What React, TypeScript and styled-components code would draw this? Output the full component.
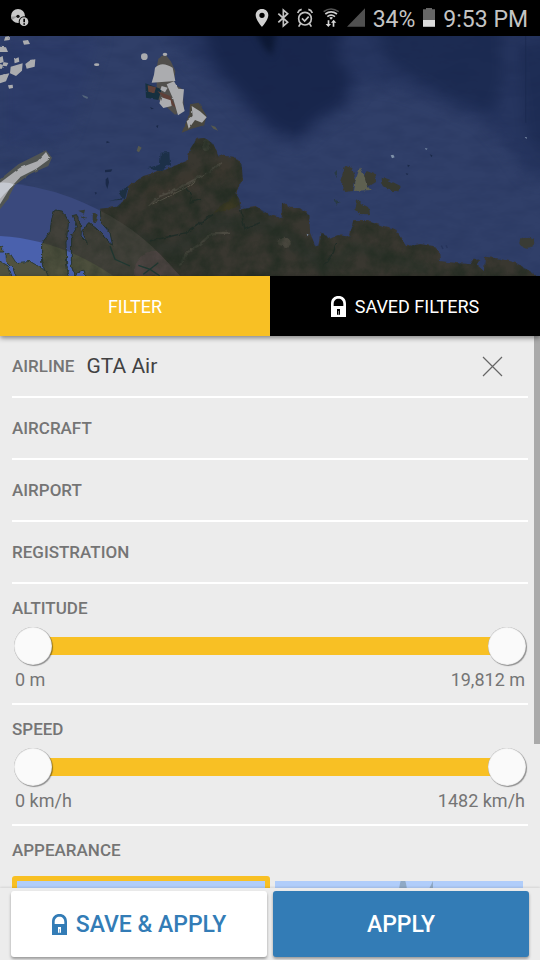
import React, { useState } from "react";
import styled, { createGlobalStyle } from "styled-components";

const YELLOW = "#f8c024";
const BLUE = "#337cb6";
const PANEL = "#ececec";

const GlobalStyle = createGlobalStyle`
  * { box-sizing: border-box; }
  body { margin: 0; background: ${PANEL}; font-family: Roboto, "Liberation Sans", sans-serif; }
  button, input { font: inherit; color: inherit; }
`;

const Screen = styled.main`
  display: flex;
  flex-direction: column;
  height: 100vh;
  overflow: hidden;
  background: ${PANEL};
`;

const StatusBar = styled.header`
  display: flex;
  align-items: center;
  flex: none;
  gap: 8px;
  height: 36px;
  padding: 0 12px 0 10px;
  background: #000;
  color: #c4c4c4;
  font-size: 23px;
  line-height: 32px;
  white-space: nowrap;
  svg { flex: none; display: block; }
`;

const StatusText = styled.span`
  padding-top: 3px;
`;

const Spacer = styled.div`
  flex: 1;
`;

const MapView = styled.div`
  flex: none;
  height: 240px;
  overflow: hidden;
  background: #303f69;
  svg { display: block; width: 100%; height: 100%; }
`;

const Tabs = styled.div`
  display: grid;
  grid-template-columns: 1fr 1fr;
  flex: none;
  position: relative;
  z-index: 1;
  box-shadow: 0 2px 5px rgba(0, 0, 0, 0.45);
`;

const Tab = styled.button<{ $active: boolean }>`
  display: flex;
  align-items: center;
  justify-content: center;
  gap: 9px;
  height: 60px;
  padding: 0;
  border: 0;
  background: ${(p) => (p.$active ? YELLOW : "#000")};
  color: #fff;
  font-size: 18px;
  line-height: 24px;
  cursor: pointer;
`;

const ButtonText = styled.span`
  padding-top: 2px;
`;

const Body = styled.div`
  flex: 1;
  min-height: 0;
  position: relative;
`;

const Scroller = styled.div`
  height: 100%;
  overflow-y: auto;
  scrollbar-width: none;
  padding: 0 12px;
  &::-webkit-scrollbar { display: none; }
`;

const ScrollThumb = styled.div`
  position: absolute;
  top: 0;
  right: 0;
  width: 6px;
  height: 74%;
  background: #aaa;
`;

const FieldRow = styled.div`
  display: flex;
  align-items: center;
  gap: 12px;
  height: 62px;
  border-bottom: 2px solid #fff;
`;

const Caption = styled.label`
  display: block;
  color: #757575;
  font-size: 17px;
  font-weight: 500;
  line-height: 24px;
`;

const FieldInput = styled.input`
  flex: 1;
  min-width: 0;
  height: 32px;
  padding: 0;
  border: 0;
  outline: 0;
  background: transparent;
  color: #424242;
  font-size: 21px;
`;

const ClearButton = styled.button`
  display: flex;
  align-items: center;
  justify-content: center;
  width: 48px;
  height: 48px;
  margin-right: 12px;
  padding: 0;
  border: 0;
  background: transparent;
  cursor: pointer;
`;

const Section = styled.section`
  padding: 12px 0 11px;
  border-bottom: 2px solid #fff;
`;

const Slider = styled.div`
  display: grid;
  align-items: center;
  height: 38px;
  margin: 7px 2px 2px;
`;

const Track = styled.div`
  grid-area: 1 / 1;
  height: 18px;
  margin: 0 19px;
  background: #d4d4d4;
`;

const Fill = styled.div`
  height: 100%;
  background: ${YELLOW};
`;

const Range = styled.input`
  grid-area: 1 / 1;
  appearance: none;
  width: 100%;
  height: 38px;
  margin: 0;
  background: transparent;
  pointer-events: none;
  &::-webkit-slider-thumb {
    appearance: none;
    width: 38px;
    height: 38px;
    border-radius: 50%;
    border: 0;
    background: #fafafa;
    box-shadow: inset 0 0 1px rgba(0, 0, 0, 0.5), 1px 1px 1px rgba(0, 0, 0, 0.4);
    pointer-events: auto;
    cursor: pointer;
  }
`;

const Limits = styled.div`
  display: flex;
  justify-content: space-between;
  padding: 0 3px;
  color: #757575;
  font-size: 18px;
  line-height: 25px;
`;

const Choices = styled.div`
  display: grid;
  grid-template-columns: 1fr 1fr;
  padding: 14px 0 32px;
`;

const Choice = styled.button<{ $selected: boolean }>`
  height: 166px;
  padding: 0;
  overflow: hidden;
  border: 5px solid ${(p) => (p.$selected ? YELLOW : "transparent")};
  border-radius: 3px;
  background: #b0cdfa;
  background-clip: padding-box;
  cursor: pointer;
  svg { display: block; width: 100%; height: 100%; }
`;

const AppearanceHead = styled.h2`
  margin: 0;
  padding-top: 12px;
  color: #757575;
  font-size: 17px;
  font-weight: 500;
  line-height: 24px;
`;

const Actions = styled.footer`
  display: grid;
  grid-template-columns: 1fr 1fr;
  flex: none;
  gap: 6px;
  padding: 3px 11px;
  position: relative;
  background: ${PANEL};
  box-shadow: 0 -1px 2px rgba(0, 0, 0, 0.1);
`;

const Action = styled.button<{ $primary?: boolean }>`
  display: flex;
  align-items: center;
  justify-content: center;
  gap: 9px;
  height: 66px;
  padding: 0;
  border: 0;
  border-radius: 3px;
  background: ${(p) => (p.$primary ? BLUE : "#fff")};
  color: ${(p) => (p.$primary ? "#fff" : BLUE)};
  box-shadow: 0 2px 3px rgba(0, 0, 0, 0.35);
  font-size: 23px;
  font-weight: 500;
  line-height: 32px;
  cursor: pointer;
`;

const Lock = () => (
  <svg width="15" height="21" viewBox="0 0 45 63" aria-hidden="true">
    <path
      fill="currentColor"
      fillRule="evenodd"
      d="M0 63V23C0 8 10 0 22.500 0S45 8 45 23V63ZM8 30H37V24C37 14 31 8 22.500 8S8 14 8 24ZM18 39V56H27V39Z"
    />
    <path fill="currentColor" opacity="0.5" d="M21 45h3v11h-3z" />
  </svg>
);

const AlertDisc = () => (
  <svg width="20" height="20" viewBox="0 0 60 60" aria-hidden="true">
    <circle cx="24" cy="24" r="21" fill="#c8c8c8" />
    <path d="M24 24L3 26 6 36Z" fill="#999" />
    <circle cx="24" cy="25" r="5" fill="#111" />
    <circle cx="42" cy="41" r="16" fill="#000" />
    <circle cx="42" cy="41" r="13" fill="#c8c8c8" />
    <path d="M40 32h5v11h-5zM40 46h5v4h-5z" fill="#000" />
  </svg>
);

const PinIcon = () => (
  <svg width="14" height="20" viewBox="0 0 42 60" aria-hidden="true">
    <path fill="#d0d0d0" fillRule="evenodd" d="M21 3C10 3 2 11 2 22 2 36 21 57 21 57S40 36 40 22C40 11 32 3 21 3ZM21 14a8 8 0 1 1 0 16 8 8 0 0 1 0-16Z" />
  </svg>
);

const BluetoothIcon = () => (
  <svg width="12" height="20" viewBox="0 0 36 60" aria-hidden="true">
    <path d="M4 17L32 43 19 54V6L32 17 4 43" fill="none" stroke="#c4c4c4" strokeWidth="5" />
  </svg>
);

const AlarmIcon = () => (
  <svg width="16" height="20" viewBox="0 0 48 60" aria-hidden="true">
    <g fill="none" stroke="#c4c4c4" strokeWidth="5">
      <circle cx="24" cy="32" r="19" />
      <path d="M15 31l8 8 12-13M2 15Q5 6 14 4M46 15Q43 6 34 4M11 46l-6 10M37 46l6 10" />
    </g>
  </svg>
);

const WifiIcon = () => (
  <svg width="18" height="20" viewBox="0 0 54 60" aria-hidden="true">
    <g fill="none" strokeWidth="5">
      <path d="M8 11Q30-5 53 11" stroke="#555" />
      <path d="M13 18Q30 5 48 18M19 26Q30 17 42 26" stroke="#cfcfcf" />
    </g>
    <path d="M25 29Q30 25 36 29L30 35ZM20 37h5v11h5l-8 9-8-9h6ZM38 35l8 9h-6v12h-5V44h-5Z" fill="#d8d8d8" />
  </svg>
);

const SignalIcon = () => (
  <svg width="18" height="20" viewBox="0 0 54 60" aria-hidden="true">
    <path d="M54 1V56H0Z" fill="#505050" />
  </svg>
);

const BatteryIcon = () => (
  <svg width="12" height="20" viewBox="0 0 36 60" aria-hidden="true">
    <path d="M9 0h18v4h9v52H0V4h9Z" fill="#666" />
    <path d="M0 36h36v20H0Z" fill="#dcdcdc" />
  </svg>
);

const CloseIcon = () => (
  <svg width="21" height="21" viewBox="0 0 21 21" aria-hidden="true">
    <path d="M1 1L20 20M20 1L1 20" stroke="#666" strokeWidth="1.200" fill="none" />
  </svg>
);

const mainland =
  "M300 518L350 512 378 488 388 450 430 420 500 400 560 375 570 340 590 308 615 306 640 325 655 358 700 362 725 385 728 430 706 470 718 490 722 520 770 512 810 538 845 545 846 500 870 515 900 517 928 538 930 590 947 632 958 625 965 590 990 608 1015 598 1048 602 1060 555 1100 555 1150 570 1185 578 1218 630 1262 625 1300 630 1318 650 1320 675 1360 680 1412 685 1422 668 1438 670 1430 686 1452 706 1455 662 1500 668 1550 682 1590 706 1640 740H266L250 702 224 716 214 690 215 600 232 572 220 538 230 536 242 570 240 600 262 622 246 584 266 560 290 578 312 600 338 628 330 590 305 562Z";

const peninsula = "M165 522L188 526 206 555 198 620 200 690 210 740H150L125 680 125 622 150 590 155 550Z";

const southwest = "M18 655L30 652 48 680 90 676 130 700 160 740H54L40 700 20 680ZM-10 628l18 6v14H-10zM-10 670L25 690 42 740H-10Z";

const outerRing = "M0 440Q110 445 215 485 380 550 480 655L540 720H0Z";
const innerRing = "M0 600Q180 610 340 720H0Z";

const SatelliteMap = () => (
  <svg viewBox="0 0 1620 720" preserveAspectRatio="xMidYMid slice" role="img" aria-label="Satellite map">
    <defs>
      <filter id="soft" x="-20%" y="-20%" width="140%" height="140%" colorInterpolationFilters="sRGB">
        <feGaussianBlur stdDeviation="20" />
      </filter>
      <filter id="haze" x="-20%" y="-20%" width="140%" height="140%" colorInterpolationFilters="sRGB">
        <feGaussianBlur stdDeviation="10" />
      </filter>
      <filter id="coast" filterUnits="userSpaceOnUse" x="-40" y="-20" width="1700" height="780" colorInterpolationFilters="sRGB">
        <feTurbulence type="fractalNoise" baseFrequency="0.06" numOctaves="3" seed="4" result="n" />
        <feDisplacementMap in="SourceGraphic" in2="n" scale="12" xChannelSelector="R" yChannelSelector="G" />
      </filter>
      <filter id="snow" filterUnits="userSpaceOnUse" x="-40" y="-20" width="1700" height="780" colorInterpolationFilters="sRGB">
        <feTurbulence type="fractalNoise" baseFrequency="0.05" numOctaves="2" seed="6" result="n" />
        <feDisplacementMap in="SourceGraphic" in2="n" scale="6" xChannelSelector="R" yChannelSelector="G" />
        <feGaussianBlur stdDeviation="1" />
      </filter>
      <filter id="grain" x="0" y="0" width="100%" height="100%" colorInterpolationFilters="sRGB">
        <feTurbulence type="fractalNoise" baseFrequency="0.02" numOctaves="5" seed="9" />
        <feColorMatrix values="0 0 0 0 0.13  0 0 0 0 0.17  0 0 0 0 0.13  1.6 0 0 0 -0.5" />
        <feComposite in2="SourceGraphic" operator="in" />
      </filter>
      <filter id="waves" x="0" y="0" width="100%" height="100%" colorInterpolationFilters="sRGB">
        <feTurbulence type="fractalNoise" baseFrequency="0.012 0.03" numOctaves="4" seed="2" />
        <feColorMatrix values="0 0 0 0 0.08  0 0 0 0 0.13  0 0 0 0 0.28  0.3 0 0 0 -0.1" />
      </filter>
      <clipPath id="outer">
        <path d={outerRing} />
      </clipPath>
      <clipPath id="inner">
        <path d={innerRing} />
      </clipPath>
    </defs>

    <rect width="1620" height="720" fill="#303f69" />
    <path d="M0 0H300L200 300 0 340Z" fill="#2d3c69" filter="url(#soft)" />
    <g filter="url(#soft)">
      <path d="M490-60L560 60 640 130 740 235 810 300 890 322 960 265 1040 215 1090 140 1200 155 1330 200 1450 255 1520 330 1580 420 1680 440V-60Z" fill="#26355f" />
      <path d="M590-60L650 90 740 190 820 275 890 305 950 245 1030 200 1050 120 1010 60 1030-60Z" fill="#18264c" />
      <path d="M1110-60L1160 70 1270 140 1350 190 1480 230 1510 120 1500-60Z" fill="#1c2b52" />
      <path d="M1550 30L1680 0V380L1580 300Z" fill="#1e2d55" />
    </g>
    <path d="M760-20H830L815 60 790 30Z" fill="#0c1833" filter="url(#haze)" />
    <rect width="1620" height="720" filter="url(#waves)" />
    <path d="M1577 0V260" stroke="#1a294d" strokeWidth="2" />
    <path d={outerRing} fill="#3a497d" />
    <path d={innerRing} fill="#4a61ad" />

    <g filter="url(#coast)">
      <path d={mainland} fill="#393730" />
      <ellipse cx="284" cy="546" rx="6" ry="15" fill="#353a30" />
      <path d="M235 524l20-3-3 12zM245 538l16 7-8 6z" fill="#333b32" />
      <path d="M445 396L480 385 482 350 508 348 510 385 480 407Z" fill="#1c3048" />
      <path d="M355 465L385 450 375 490 330 495 368 486Z" fill="#1d3042" />
      <path d="M1035 390L1055 395 1068 430 1058 465 1036 468 1020 438ZM1100 405L1125 415 1128 438 1105 452 1090 425Z" fill="#393a31" />
      <path d="M1080 394L1092 418 1100 448 1112 462 1062 465 1068 428Z" fill="#5e6050" />
      <path d="M1145 425L1170 434 1202 450 1195 466 1170 464 1148 450ZM1072 490L1086 504 1108 515 1110 535 1080 534 1066 520Z" fill="#363930" />
      <ellipse cx="1582" cy="620" rx="24" ry="15" fill="#393b34" />
      <path d="M1003 410l8-8v25zM1002 490l18 8-10 8z" fill="#293a45" />
    </g>

    <g filter="url(#haze)" fill="none" opacity="0.6">
      <path d="M400 605L520 645 640 560 810 570 990 700" stroke="#2a322b" strokeWidth="44" />
      <path d="M440 480L690 395" stroke="#3e382f" strokeWidth="50" />
      <path d="M1000 690L1060 630 1280 700" stroke="#2b342b" strokeWidth="26" />
    </g>
    <g filter="url(#coast)" fill="none">
      <path d="M445 512L480 480 530 460 585 430 630 405 665 380" stroke="#4d4a41" strokeWidth="6" />
      <path d="M460 504L565 452 615 411" stroke="#615d51" strokeWidth="3" />
      <path d="M540 685L560 650 600 625 635 592 690 590" stroke="#4c4a41" strokeWidth="7" />
      <path d="M640 530L680 498 705 475 718 505 690 522Z" fill="#3b3922" />
      <ellipse cx="618" cy="328" rx="12" ry="18" fill="#4c4c42" />
      <path d="M830 625Q835 598 858 603 882 615 865 635Z" fill="#48463d" />
      <path d="M560 455L575 480 570 500 600 490M640 535L560 590 450 615M722 520L735 580 780 560M970 690L1000 650 1010 620" stroke="#202d28" strokeWidth="4" />
    </g>
    <path d={mainland} filter="url(#grain)" />

    <g clipPath="url(#outer)">
      <g fill="#42413a" stroke="#26342f" strokeWidth="3" filter="url(#coast)">
        <path d={mainland} />
        <path d={peninsula} />
      </g>
      <path d="M400 720Q410 640 470 645 520 680 550 720Z" fill="#4d4442" filter="url(#coast)" />
      <path d="M330 630L345 670 390 690M415 688L450 700 430 715M450 700L475 680M480 720L450 700" fill="none" stroke="#1f3a34" strokeWidth="4" />
    </g>
    <g clipPath="url(#inner)">
      <g fill="#50523f" stroke="#2d3b36" strokeWidth="3" filter="url(#coast)">
        <path d={mainland} />
        <path d={peninsula} />
        <path d={southwest} />
      </g>
    </g>
    <g clipPath="url(#outer)" opacity="0.5">
      <path d={mainland} filter="url(#grain)" />
      <path d={peninsula} filter="url(#grain)" />
    </g>

    <g filter="url(#snow)">
      <path d="M470 95L475 68 495 54 512 75 526 105 522 145 548 160 552 220 525 236 470 185Z" fill="#514f4c" />
      <path d="M436 142L485 160 475 192 438 185Z" fill="#16303f" />
      <path d="M443 148L468 154 463 172 445 167ZM472 165L510 180 530 218 495 190Z" fill="#5f4038" />
      <path d="M545 290L568 235 570 205 596 200 620 240 612 268 575 278Z" fill="#49473f" />
      <path d="M632 268l14 4 8 12-14-6zM410 345l5-16 10 6-8 14z" fill="#56594f" />
      <path d="M0 430L55 385 115 355 138 343 156 365 145 390 90 414 45 447 22 492 0 520Z" fill="#515553" />
    </g>
    <g fill="#abacaf" filter="url(#snow)">
      <path d="M465 95Q485 74 518 95L526 135 455 140 462 116Z" />
      <path d="M500 145L522 136 535 158 552 160 548 200 554 225 534 238 520 190Z" />
      <path d="M484 184L512 193 515 210 490 216 478 202ZM485 150l18 5-8 14-14-8z" />
      <path d="M575 210L600 226 620 244 606 260 585 252 566 278 560 256 578 240Z" />
      <path d="M0 440L60 395 112 376 138 348 150 368 108 399 62 422 30 457 0 505Z" />
      <path d="M32 92L68 82 66 104 48 120 30 112ZM76 84L92 72 106 70 104 92 80 98ZM42 70L56 64 58 77 44 82Z" />
      <path d="M68 14L84 12 90 24 72 26ZM0 32L18 34 24 48 0 48ZM0 118L28 112 18 136 0 142ZM16 2L30 0 29 12 12 14Z" />
      <path d="M0 64l8-4 3 18-11 4zM10 78l15 3-5 10-12-2zM24 148l14-2 1 10-12 2zM0 84l8 2v12H0z" />
      <circle cx="433" cy="62" r="10" />
      <ellipse cx="290" cy="86" rx="8" ry="4" />
      <ellipse cx="495" cy="55" rx="7" ry="5" />
    </g>
    <g fill="#1a2948">
      <path d="M315 402l22-2-4 7-18 2zM317 430l7-6 3 15-5 20-5-14zM320 315l10 4-11 3zM450 213l12 5-8 2zM468 270l7-3-2 10zM284 468l7 2-4 6zM1289 355l8 3-2 6zM1222 386l8 2-6 6zM1217 412l8 1-4 5z" />
    </g>
    <path d="M1172 358l8-2 4 8-8 3zM1275 336l8 2-5 4zM1574 304l6-1v6zM920 593l6 3-4 4z" fill="#7f91a9" />
    <path d="M246 176l18 7-2 6-12-6z" fill="#53657b" />
    <path d="M1324 629l5 10M1338 628l4 8" stroke="#26345b" strokeWidth="4" />
    <path d="M0 440Q30 438 42 446L12 475 0 488Z" fill="#c5c9d1" />
  </svg>
);

const PlanePreview = ({ large }: { large?: boolean }) => (
  <svg viewBox="0 0 248 156" preserveAspectRatio="xMidYMin slice" aria-hidden="true">
    {large ? (
      <g fill="#8fa9c5">
        <path d="M128-5Q132 0 133 20V45L180 72V80L133 66V100L146 112V118L128 112 110 118V112L123 100V66L76 80V72L123 45V20Q124 0 128-5Z" />
        <path d="M154 8L158 0V18H153Z" />
      </g>
    ) : (
      <path d="M124 35L128 48V68L158 86V92L128 82V102L136 109V113L124 109 112 113V109L120 102V82L90 92V86L120 68V48Z" fill={YELLOW} />
    )}
  </svg>
);

type Field = { id: string; label: string };

const fields: Field[] = [
  { id: "airline", label: "AIRLINE" },
  { id: "aircraft", label: "AIRCRAFT" },
  { id: "airport", label: "AIRPORT" },
  { id: "registration", label: "REGISTRATION" },
];

type RangeProps = { id: string; label: string; max: number; format: (n: number) => string };

const RangeFilter = ({ id, label, max, format }: RangeProps) => {
  const [low, setLow] = useState(0);
  const [high, setHigh] = useState(max);
  return (
    <Section>
      <Caption htmlFor={id}>{label}</Caption>
      <Slider>
        <Track>
          <Fill style={{ marginLeft: `${(low / max) * 100}%`, width: `${((high - low) / max) * 100}%` }} />
        </Track>
        <Range id={id} type="range" min={0} max={max} value={low} onChange={(e) => setLow(Math.min(+e.target.value, high))} />
        <Range type="range" aria-label={`${label} maximum`} min={0} max={max} value={high} onChange={(e) => setHigh(Math.max(+e.target.value, low))} />
      </Slider>
      <Limits>
        <span>{format(low)}</span>
        <span>{format(high)}</span>
      </Limits>
    </Section>
  );
};

export default function App() {
  const [values, setValues] = useState<Record<string, string>>({ airline: "GTA Air" });
  const [tab, setTab] = useState("filter");
  const [appearance, setAppearance] = useState(0);
  const update = (id: string, value: string) => setValues({ ...values, [id]: value });

  return (
    <>
      <GlobalStyle />
      <Screen>
        <StatusBar>
          <AlertDisc />
          <Spacer />
          <PinIcon />
          <BluetoothIcon />
          <AlarmIcon />
          <WifiIcon />
          <SignalIcon />
          <StatusText>34%</StatusText>
          <BatteryIcon />
          <StatusText>9:53 PM</StatusText>
        </StatusBar>
        <MapView>
          <SatelliteMap />
        </MapView>
        <Tabs role="tablist">
          <Tab role="tab" aria-selected={tab === "filter"} $active={tab === "filter"} onClick={() => setTab("filter")}>
            <ButtonText>FILTER</ButtonText>
          </Tab>
          <Tab role="tab" aria-selected={tab === "saved"} $active={tab === "saved"} onClick={() => setTab("saved")}>
            <Lock />
            <ButtonText>SAVED FILTERS</ButtonText>
          </Tab>
        </Tabs>
        <Body>
          <Scroller>
            {fields.map((f) => (
              <FieldRow key={f.id}>
                <Caption htmlFor={f.id}>{f.label}</Caption>
                <FieldInput id={f.id} type="text" value={values[f.id] ?? ""} onChange={(e) => update(f.id, e.target.value)} />
                {values[f.id] && (
                  <ClearButton aria-label={`Clear ${f.label}`} onClick={() => update(f.id, "")}>
                    <CloseIcon />
                  </ClearButton>
                )}
              </FieldRow>
            ))}
            <RangeFilter id="altitude" label="ALTITUDE" max={19812} format={(n) => `${n.toLocaleString("en-US")} m`} />
            <RangeFilter id="speed" label="SPEED" max={1482} format={(n) => `${n} km/h`} />
            <AppearanceHead>APPEARANCE</AppearanceHead>
            <Choices>
              {[0, 1].map((i) => (
                <Choice key={i} aria-label={`Appearance ${i + 1}`} aria-pressed={appearance === i} $selected={appearance === i} onClick={() => setAppearance(i)}>
                  <PlanePreview large={i === 1} />
                </Choice>
              ))}
            </Choices>
          </Scroller>
          <ScrollThumb />
        </Body>
        <Actions>
          <Action>
            <Lock />
            <ButtonText>SAVE &amp; APPLY</ButtonText>
          </Action>
          <Action $primary>
            <ButtonText>APPLY</ButtonText>
          </Action>
        </Actions>
      </Screen>
    </>
  );
}
